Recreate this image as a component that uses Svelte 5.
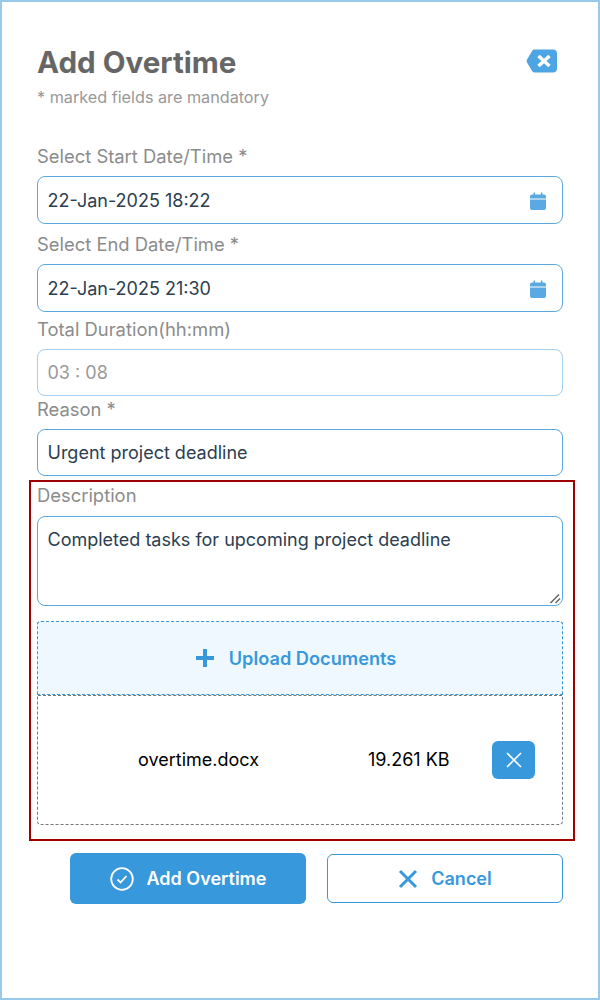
<script>
  let start = $state('22-Jan-2025 18:22');
  let end = $state('22-Jan-2025 21:30');
  let reason = $state('Urgent project deadline');
  let description = $state('Completed tasks for upcoming project deadline');
</script>

{#snippet calendar()}
  <svg class="cal" viewBox="0 0 18 18" width="18" height="18" aria-hidden="true">
    <path d="M4.5 0.5h1.6v2h5.8v-2h1.6v2h1.5a2 2 0 0 1 2 2v2H1v-2a2 2 0 0 1 2-2h1.5zM1 7.6h16V16a2 2 0 0 1-2 2H3a2 2 0 0 1-2-2z" />
  </svg>
{/snippet}

<div class="panel">
  <header class="head">
    <div>
      <h1>Add Overtime</h1>
      <p class="hint">* marked fields are mandatory</p>
    </div>
    <button class="close" aria-label="Close">
      <svg viewBox="0 0 32 24" width="32" height="24" aria-hidden="true">
        <path class="fill" d="M8.6 0.500H27a4 4 0 0 1 4 4v15a4 4 0 0 1-4 4H8.6a3 3 0 0 1-2.2-1L1 13.400a2.600 2.600 0 0 1 0-2.800l5.400-9.100a3 3 0 0 1 2.200-1z" />
        <path class="x" d="M12.500 7l11 10M23.500 7l-11 10" />
      </svg>
    </button>
  </header>

  <label class="label first" for="start">Select Start Date/Time *</label>
  <div class="field">
    <input id="start" class="input" bind:value={start} />
    {@render calendar()}
  </div>

  <label class="label second" for="end">Select End Date/Time *</label>
  <div class="field">
    <input id="end" class="input" bind:value={end} />
    {@render calendar()}
  </div>

  <label class="label third" for="total">Total Duration(hh:mm)</label>
  <input id="total" class="input muted" value="03 : 08" disabled />

  <label class="label fourth" for="reason">Reason *</label>
  <input id="reason" class="input short" bind:value={reason} />

  <section class="marked">
    <label class="label desc" for="description">Description</label>
    <div class="field">
      <textarea id="description" class="input area" bind:value={description}></textarea>
      <svg class="grip" viewBox="0 0 12 12" width="12" height="12" aria-hidden="true">
        <path d="M1.500 11L10 2.500M6.500 11L11 6.500" />
      </svg>
    </div>

    <div class="docs">
      <button class="upload">
        <svg viewBox="0 0 20 20" width="20" height="20" aria-hidden="true">
          <path d="M8 1h4v7h7v4h-7v7H8v-7H1V8h7z" />
        </svg>
        Upload Documents
      </button>
      <div class="file">
        <span>overtime.docx</span>
        <span>19.261 KB</span>
        <button class="remove" aria-label="Remove file">
          <svg viewBox="0 0 16 16" width="16" height="16" aria-hidden="true">
            <path d="M1 1l14 14M15 1L1 15" />
          </svg>
        </button>
      </div>
    </div>
  </section>

  <footer class="actions">
    <button class="btn primary">
      <svg viewBox="0 0 24 24" width="24" height="24" aria-hidden="true">
        <circle cx="12" cy="12" r="10.8" />
        <path d="M7.500 12.500l3 3 6-6.500" />
      </svg>
      Add Overtime
    </button>
    <button class="btn secondary">
      <svg viewBox="0 0 20 20" width="20" height="20" aria-hidden="true">
        <path d="M2 2l16 16M18 2L2 18" />
      </svg>
      Cancel
    </button>
  </footer>
</div>

<style>
  :global(body) {
    font-family: Inter, "Noto Sans", sans-serif;
  }

  .panel {
    box-sizing: border-box;
    width: 600px;
    height: 1000px;
    padding: 0 35px;
    border: 2px solid #99c9ec;
    background: #fff;
    overflow: hidden;
  }

  .head {
    display: flex;
    justify-content: space-between;
    align-items: flex-start;
    padding-top: 43px;
  }

  h1 {
    margin: 0;
    font-size: 29.600px;
    line-height: 34px;
    font-weight: 700;
    color: #666;
  }

  .hint {
    margin: 8px 0 0;
    font-size: 16.200px;
    line-height: 20px;
    color: #999;
  }

  .close {
    margin: 4px 5px 0 0;
    padding: 0;
    border: 0;
    background: none;
    line-height: 0;
  }

  .close .fill {
    fill: #4da6e3;
  }

  .close .x {
    fill: none;
    stroke: #fff;
    stroke-width: 3.400;
  }

  .label {
    display: block;
    font-size: 18.400px;
    line-height: 22px;
    color: #8c8c8c;
  }

  .first { margin-top: 38px; margin-bottom: 9px; }
  .second { margin-top: 9px; margin-bottom: 9px; }
  .third { margin-top: 6px; margin-bottom: 9px; }
  .fourth { margin-top: 2px; margin-bottom: 9px; }

  .field {
    position: relative;
  }

  .cal {
    position: absolute;
    right: 16px;
    top: 16px;
    fill: #5aa9e3;
  }

  .grip {
    position: absolute;
    right: 2px;
    bottom: 2px;
    fill: none;
    stroke: #666;
    stroke-width: 1.5;
    pointer-events: none;
  }

  .input {
    display: block;
    box-sizing: border-box;
    width: 100%;
    height: 48px;
    padding: 0 9.500px;
    border: 1px solid #5aa9e3;
    border-radius: 8px;
    background: #fff;
    font: 400 18px Inter, sans-serif;
    color: #2c3e50;
    outline: none;
  }

  .muted {
    height: 47px;
    border-color: #a5cfef;
    color: #999;
  }

  .short {
    height: 47px;
  }

  .marked {
    margin: 4px -12px 0 -8px;
    padding: 2px 10px 0 6px;
    height: 361px;
    box-sizing: border-box;
    border: 2px solid #a00000;
  }

  .desc {
    margin-bottom: 10px;
  }

  .area {
    height: 90px;
    padding: 12px 9.500px;
    line-height: 22px;
    resize: none;
  }

  .docs {
    margin-top: 15px;
    height: 204px;
    box-sizing: border-box;
    border: 1px dashed #777;
    border-radius: 4px;
  }

  .upload {
    display: flex;
    align-items: center;
    justify-content: center;
    gap: 14px;
    box-sizing: border-box;
    width: calc(100% + 2px);
    height: 74px;
    margin: -1px -1px 0;
    padding: 0 9px 0 0;
    border: 1px dashed #3898dc;
    border-radius: 4px 4px 0 0;
    background: #f0f8ff;
    font: 600 18.200px Inter, sans-serif;
    color: #3898dc;
  }

  .upload svg {
    fill: #3898dc;
  }

  .file {
    display: grid;
    grid-template-columns: 230px 124px 43px;
    align-items: center;
    box-sizing: border-box;
    height: 130px;
    padding: 0 0 2px 100px;
    border-top: 1px dashed #777;
    font-size: 18px;
    color: #000;
  }

  .remove {
    display: flex;
    align-items: center;
    justify-content: center;
    width: 43px;
    height: 38px;
    padding: 0;
    border: 0;
    border-radius: 6px;
    background: #3898dc;
  }

  .remove svg {
    fill: none;
    stroke: #fff;
    stroke-width: 1.6;
  }

  .actions {
    display: flex;
    justify-content: flex-end;
    align-items: center;
    gap: 21px;
    margin-top: 12px;
  }

  .btn {
    display: flex;
    align-items: center;
    justify-content: center;
    gap: 13px;
    box-sizing: border-box;
    width: 236px;
    border-radius: 6px;
    font: 600 18px Inter, sans-serif;
  }

  .primary {
    height: 51px;
    border: 0;
    background: #3898dc;
    color: #fff;
  }

  .primary svg {
    fill: none;
    stroke: #fff;
    stroke-width: 1.8;
  }

  .secondary {
    height: 49px;
    border: 1px solid #3898dc;
    background: #fff;
    color: #3898dc;
  }

  .secondary svg {
    fill: none;
    stroke: #3898dc;
    stroke-width: 3;
  }
</style>
